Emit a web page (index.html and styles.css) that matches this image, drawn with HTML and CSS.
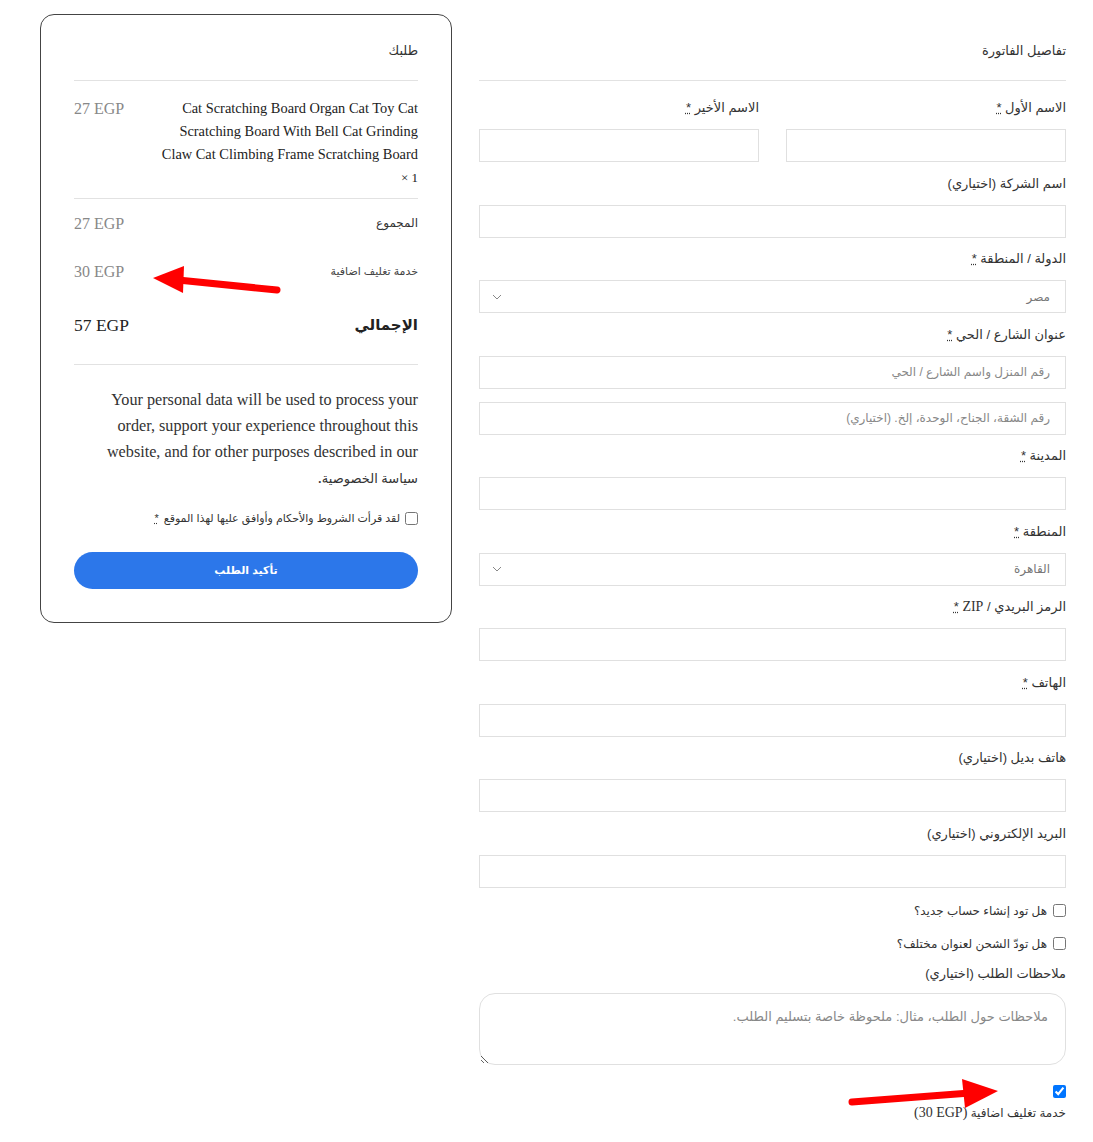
FILE: index.html
```html
<!DOCTYPE html>
<html lang="ar" dir="rtl">
<head>
    <meta charset="UTF-8">
    <meta name="viewport" content="width=device-width, initial-scale=1.0">
    <title>إتمام الطلب</title>
    <link rel="stylesheet" href="styles.css">
</head>
<body>
    <div class="checkout">
        <section class="billing">
            <h3 class="block-title">تفاصيل الفاتورة</h3>

            <div class="field-row">
                <div class="field">
                    <label for="first_name">الاسم الأول <abbr class="req" title="مطلوب">*</abbr></label>
                    <input type="text" id="first_name">
                </div>
                <div class="field">
                    <label for="last_name">الاسم الأخير <abbr class="req" title="مطلوب">*</abbr></label>
                    <input type="text" id="last_name">
                </div>
            </div>

            <div class="field">
                <label for="company">اسم الشركة (اختياري)</label>
                <input type="text" id="company">
            </div>

            <div class="field">
                <label for="country">الدولة / المنطقة <abbr class="req" title="مطلوب">*</abbr></label>
                <select id="country"><option>مصر</option></select>
            </div>

            <div class="field">
                <label for="address_1">عنوان الشارع / الحي <abbr class="req" title="مطلوب">*</abbr></label>
                <input type="text" id="address_1" placeholder="رقم المنزل واسم الشارع / الحي">
                <input type="text" id="address_2" placeholder="رقم الشقة، الجناح، الوحدة، إلخ. (اختياري)">
            </div>

            <div class="field">
                <label for="city">المدينة <abbr class="req" title="مطلوب">*</abbr></label>
                <input type="text" id="city">
            </div>

            <div class="field">
                <label for="state">المنطقة <abbr class="req" title="مطلوب">*</abbr></label>
                <select id="state"><option>القاهرة</option></select>
            </div>

            <div class="field">
                <label for="postcode">الرمز البريدي / <span class="latin">ZIP</span> <abbr class="req" title="مطلوب">*</abbr></label>
                <input type="text" id="postcode">
            </div>

            <div class="field">
                <label for="phone">الهاتف <abbr class="req" title="مطلوب">*</abbr></label>
                <input type="tel" id="phone">
            </div>

            <div class="field">
                <label for="phone_2">هاتف بديل (اختياري)</label>
                <input type="tel" id="phone_2">
            </div>

            <div class="field">
                <label for="email">البريد الإلكتروني (اختياري)</label>
                <input type="email" id="email">
            </div>

            <label class="check-row"><input type="checkbox"> هل تود إنشاء حساب جديد؟</label>
            <label class="check-row"><input type="checkbox"> هل تودّ الشحن لعنوان مختلف؟</label>

            <div class="field notes">
                <label for="order_comments">ملاحظات الطلب (اختياري)</label>
                <textarea id="order_comments" placeholder="ملاحظات حول الطلب، مثال: ملحوظة خاصة بتسليم الطلب."></textarea>
            </div>

            <div class="gift">
                <input type="checkbox" id="gift_wrap" checked>
                <label for="gift_wrap">خدمة تغليف اضافية <bdi dir="ltr" class="latin">(30 EGP)</bdi></label>
            </div>
        </section>

        <aside class="summary">
            <h3 class="block-title">طلبك</h3>

            <div class="product">
                <div class="product-name">Cat Scratching Board Organ Cat Toy Cat Scratching Board With Bell Cat Grinding Claw Cat Climbing Frame Scratching Board <strong class="qty">× 1</strong></div>
                <bdi dir="ltr" class="price">27 EGP</bdi>
            </div>

            <div class="totals">
                <div class="total-row">
                    <span class="total-label">المجموع</span>
                    <bdi dir="ltr" class="price">27 EGP</bdi>
                </div>
                <div class="total-row">
                    <span class="total-label small">خدمة تغليف اضافية</span>
                    <bdi dir="ltr" class="price">30 EGP</bdi>
                </div>
                <div class="total-row grand">
                    <span class="total-label">الإجمالي</span>
                    <bdi dir="ltr" class="price">57 EGP</bdi>
                </div>
            </div>

            <p class="privacy">Your personal data will be used to process your order, support your experience throughout this website, and for other purposes described in our <a href="#">سياسة الخصوصية</a>.</p>

            <label class="terms"><input type="checkbox"> لقد قرأت الشروط والأحكام وأوافق عليها لهذا الموقع <abbr class="req" title="مطلوب">*</abbr></label>

            <button type="button" class="place-order">تأكيد الطلب</button>
        </aside>
    </div>

    <!-- annotation arrows from the original screenshot -->
    <svg class="marks" width="1093" height="1142" viewBox="0 0 1093 1142">
        <line x1="277" y1="290" x2="178" y2="280" stroke="#ff0000" stroke-width="7" stroke-linecap="round"/>
        <polygon points="153,278 184,266 183,293" fill="#ff0000"/>
        <line x1="852" y1="1102" x2="970" y2="1093" stroke="#ff0000" stroke-width="7" stroke-linecap="round"/>
        <polygon points="962,1079 998,1091 965,1108" fill="#ff0000"/>
    </svg>
</body>
</html>
```

FILE: styles.css
```css
*, ::before, ::after {
    box-sizing: border-box;
}
body {
    margin: 0;
    padding: 14px 27px 0 40px;
    font-family: "Liberation Sans", "DejaVu Sans", sans-serif;
    font-size: 13px;
    color: #333;
    background: #fff;
    position: relative;
}
h3, p {
    margin: 0;
}
a {
    color: inherit;
    text-decoration: none;
}
.latin {
    font-family: "Liberation Serif", serif;
    font-size: 14px;
}
.checkout {
    display: flex;
    gap: 27px;
    align-items: flex-start;
}
.billing {
    width: 587px;
    padding-top: 27px;
}
.block-title {
    font-size: 13px;
    font-weight: normal;
    line-height: 20px;
    padding-bottom: 19px;
    border-bottom: 1px solid #e2e2e2;
    margin-bottom: 17px;
}

/* billing form */
.field-row {
    display: flex;
    gap: 27px;
}
.field-row .field {
    flex: 1;
}
.field {
    margin-bottom: 11.5px;
}
.field label {
    display: block;
    line-height: 20px;
    margin-bottom: 11px;
    font-size: 13px;
}
.req {
    color: #333;
    cursor: help;
}
.field input,
.field select,
.field textarea {
    display: block;
    width: 100%;
    height: 33px;
    border: 1px solid #e0e0e0;
    border-radius: 0;
    background: #fff;
    padding: 0 15px;
    font-family: inherit;
    font-size: 12px;
    color: #777;
    outline: none;
}
.field input + input {
    margin-top: 13px;
}
.field input::placeholder,
.field textarea::placeholder {
    color: #888;
}
.field select {
    appearance: none;
    -webkit-appearance: none;
    background-image: url("data:image/svg+xml,%3Csvg xmlns='http://www.w3.org/2000/svg' width='10' height='6' viewBox='0 0 10 6'%3E%3Cpath d='M1 1l4 4 4-4' fill='none' stroke='%23888' stroke-width='1'/%3E%3C/svg%3E");
    background-repeat: no-repeat;
    background-position: left 12px center;
}
.check-row {
    display: flex;
    align-items: center;
    gap: 6px;
    line-height: 20px;
    font-size: 12px;
    margin: 13px 0;
}
.check-row + .check-row {
    margin: 0 0 10px;
}
.check-row input,
.terms input {
    margin: 0;
    width: 13px;
    height: 13px;
}
.notes label {
    margin-bottom: 9.5px;
}
.field textarea {
    height: 72px;
    border-radius: 16px;
    padding: 15px 17px;
    font-size: 13px;
    resize: vertical;
}
.gift {
    margin-top: 20px;
}
.gift input {
    display: block;
    margin: 0;
    width: 13px;
    height: 13px;
}
.gift label {
    display: block;
    font-size: 12px;
    line-height: 18px;
    margin-top: 6px;
}

/* order summary */
.summary {
    width: 412px;
    border: 1px solid #444;
    border-radius: 14px;
    padding: 26px 33px 33px;
}
.summary .block-title {
    margin-bottom: 16px;
}
.product {
    display: flex;
    justify-content: space-between;
    align-items: flex-start;
    padding-bottom: 9px;
    border-bottom: 1px solid #e2e2e2;
}
.product-name {
    width: 262px;
    font-family: "Liberation Serif", serif;
    font-size: 14.4px;
    line-height: 23px;
    color: #222;
}
.qty {
    font-weight: normal;
    font-size: 13px;
}
.price {
    font-family: "Liberation Serif", serif;
    font-size: 16px;
    color: #888;
    line-height: 23px;
}
.totals {
    padding-top: 12px;
    padding-bottom: 26px;
    border-bottom: 1px solid #e2e2e2;
}
.total-row {
    display: flex;
    justify-content: space-between;
    align-items: center;
    height: 24px;
    margin-bottom: 24px;
}
.total-label {
    font-size: 12px;
}
.total-label.small {
    font-size: 11px;
    color: #444;
}
.grand {
    margin-top: 29px;
    margin-bottom: 0;
    height: 26px;
}
.grand .total-label {
    font-size: 15px;
    font-weight: bold;
    color: #222;
}
.grand .price {
    font-size: 17.5px;
    color: #222;
}
.privacy {
    margin-top: 22px;
    font-family: "Liberation Serif", serif;
    font-size: 16.2px;
    line-height: 26px;
    color: #333;
}
.privacy a {
    font-family: "Liberation Sans", "DejaVu Sans", sans-serif;
    font-size: 13px;
}
.terms {
    display: flex;
    align-items: center;
    gap: 5px;
    margin-top: 17px;
    font-size: 11px;
    line-height: 18px;
}
.place-order {
    display: block;
    width: 100%;
    height: 37px;
    margin-top: 25px;
    border: none;
    border-radius: 19px;
    background: #2c77ea;
    color: #fff;
    font-family: inherit;
    font-size: 11px;
    font-weight: bold;
    cursor: pointer;
}

.marks {
    position: absolute;
    top: 0;
    left: 0;
    pointer-events: none;
}
```
